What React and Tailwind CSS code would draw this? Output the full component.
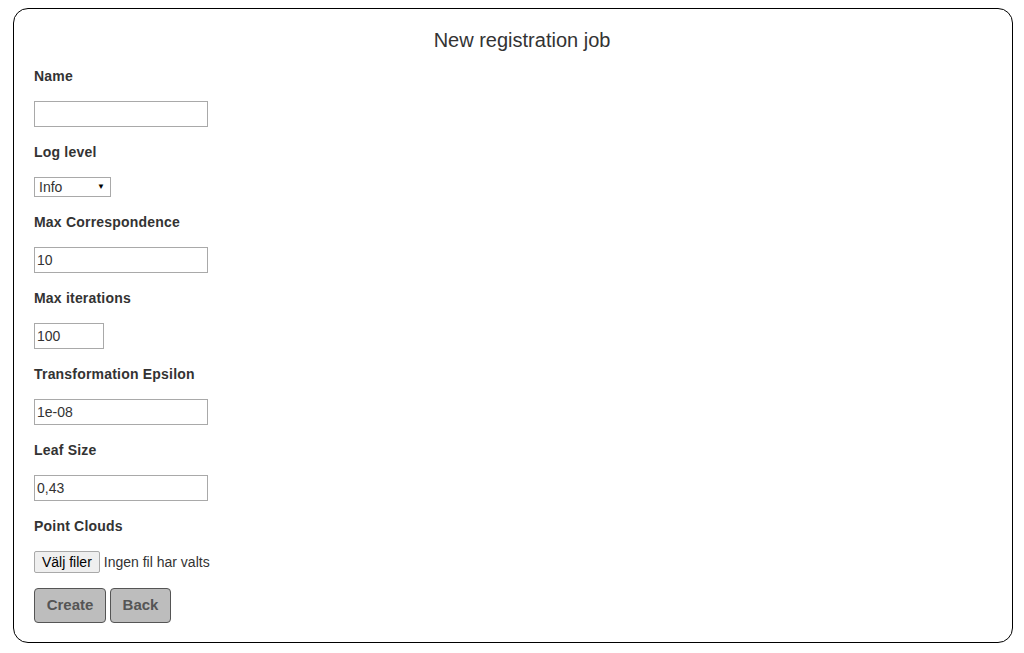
import React from 'react';

const font = { fontFamily: '"Liberation Sans", Arial, sans-serif' };

const Field = ({ label, children }) => (
  <div className="mb-[15px]">
    <label className="block text-[14px] leading-5 font-bold text-[#333] mb-[15px] tracking-[0.2px]">{label}</label>
    {children}
  </div>
);

const TextInput = ({ value = '', width = 'w-[174px]' }) => (
  <input
    type="text"
    defaultValue={value}
    className={`${width} h-[26px] border border-[#a9a9a9] bg-white px-[2px] text-[14px] text-[#333] outline-none block`}
  />
);

export default function App() {
  return (
    <div className="bg-white min-h-[653px] pt-[8px] pl-[13px]" style={font}>
      <div className="w-[1000px] h-[635px] border border-black rounded-[15px] px-[20px]">
        <h1 className="text-center text-[20px] leading-7 text-[#333] mt-[17px] mb-[12px] pl-[18px]">New registration job</h1>

        <Field label="Name">
          <TextInput />
        </Field>

        <Field label="Log level">
          <div className="w-[77px] h-[20px] border border-[#a9a9a9] bg-white flex items-center justify-between pl-[4px] pr-[5px] text-[14px] text-[#333]">
            <span>Info</span>
            <span className="text-[8px] text-black">▼</span>
          </div>
        </Field>

        <Field label="Max Correspondence">
          <TextInput value="10" />
        </Field>

        <Field label="Max iterations">
          <TextInput value="100" width="w-[70px]" />
        </Field>

        <Field label="Transformation Epsilon">
          <TextInput value="1e-08" />
        </Field>

        <Field label="Leaf Size">
          <TextInput value="0,43" />
        </Field>

        <Field label="Point Clouds">
          <div className="flex items-center gap-[4px] h-[22px]">
            <button className="h-[22px] px-[7px] border border-[#a9a9a9] rounded-[2px] bg-[#efefef] text-[14px] text-black">Välj filer</button>
            <span className="text-[14px] text-[#333]">Ingen fil har valts</span>
          </div>
        </Field>

        <div className="flex gap-[4px]">
          <button className="w-[72px] h-[35px] bg-[#bdbdbd] border border-[#555] rounded-[4px] text-[15px] font-bold text-[#555]">Create</button>
          <button className="w-[61px] h-[35px] bg-[#bdbdbd] border border-[#555] rounded-[4px] text-[15px] font-bold text-[#555]">Back</button>
        </div>
      </div>
    </div>
  );
}
